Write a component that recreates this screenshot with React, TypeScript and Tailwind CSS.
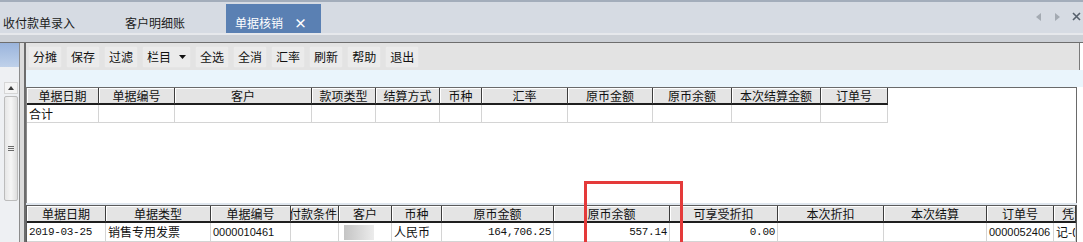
import React from "react";

type Col = { label: string; w: string; value?: string; align?: string; mono?: boolean; head?: string };

const TOP_COLS: Col[] = [
  { label: "单据日期", w: "w-[72px]", value: "合计" },
  { label: "单据编号", w: "w-[76px]" },
  { label: "客户", w: "w-[137px]" },
  { label: "款项类型", w: "w-[64px]" },
  { label: "结算方式", w: "w-[64px]" },
  { label: "币种", w: "w-[42px]" },
  { label: "汇率", w: "w-[86px]" },
  { label: "原币金额", w: "w-[85px]" },
  { label: "原币余额", w: "w-[79px]" },
  { label: "本次结算金额", w: "w-[89px]" },
  { label: "订单号", w: "w-[67px]" },
];

const BOTTOM_COLS: Col[] = [
  { label: "单据日期", w: "w-[79px]", value: "2019-03-25", mono: true },
  { label: "单据类型", w: "w-[105px]", value: "销售专用发票" },
  { label: "单据编号", w: "w-[80px]", value: "0000010461", align: "num" },
  { label: "付款条件", w: "w-[48px]", head: "justify-end pr-[1px]" },
  { label: "客户", w: "w-[53px]", value: "__blur" },
  { label: "币种", w: "w-[50px]", value: "人民币" },
  { label: "原币金额", w: "w-[112px]", value: "164,706.25", align: "right", mono: true },
  { label: "原币余额", w: "w-[116px]", value: "557.14", align: "right", mono: true },
  { label: "可享受折扣", w: "w-[108px]", value: "0.00", align: "right", mono: true },
  { label: "本次折扣", w: "w-[106px]" },
  { label: "本次结算", w: "w-[103px]" },
  { label: "订单号", w: "w-[67px]", value: "0000052406", align: "num" },
  { label: "凭证号", w: "w-[22px]", value: "记-0", head: "justify-start pl-[8px]" },
];

const TOOLS = ["分摊", "保存", "过滤", "栏目", "全选", "全消", "汇率", "刷新", "帮助", "退出"];

function HeaderRow({ cols, h }: { cols: Col[]; h: string }) {
  return (
    <div className={`flex ${h}`}>
      {cols.map((c, i) => (
        <div
          key={i}
          className={`${c.w} shrink-0 flex items-center overflow-hidden whitespace-nowrap bg-[#e4e4e4] border-r border-r-[#3c3c3c] border-b-2 border-b-[#1e1e1e] shadow-[inset_1px_1px_0_#ffffff] ${c.head ?? "justify-center"}`}
        >
          <span className="shrink-0">{c.label}</span>
        </div>
      ))}
    </div>
  );
}

function DataRow({ cols, h }: { cols: Col[]; h: string }) {
  return (
    <div className={`flex ${h} bg-white`}>
      {cols.map((c, i) => (
        <div
          key={i}
          className={`${c.w} shrink-0 flex items-center overflow-hidden whitespace-nowrap border-r border-b border-[#d4d4d4] px-[2px] ${
            c.align === "right" ? "justify-end" : "justify-start"
          }`}
        >
          {c.value === "__blur" ? (
            <div className="ml-[3px] w-[30px] h-[15px] bg-gradient-to-r from-[#c4c4c4] to-[#ececec] blur-[0.5px]" />
          ) : c.mono ? (
            <span className="font-['Liberation_Mono',monospace] text-[11px] tracking-[-0.3px]">{c.value}</span>
          ) : c.align === "num" ? (
            <span className="font-['Liberation_Sans',sans-serif] text-[11px]">{c.value}</span>
          ) : (
            <span>{c.value}</span>
          )}
        </div>
      ))}
    </div>
  );
}

export default function App() {
  return (
    <div className="relative w-[1083px] h-[242px] overflow-hidden bg-white text-[12px] leading-[14px] text-[#111] font-['Noto_Sans_CJK_SC','Noto_Sans',sans-serif]">
      {/* tab bar */}
      <div className="h-[33px] flex items-end bg-[#d6dbe3] border-t-2 border-[#a3adbb]">
        <div className="w-[110px] h-[29px] pl-[3px] pt-[12px] text-[#1b1b1b]">收付款单录入</div>
        <div className="w-[116px] h-[29px] pl-[15px] pt-[12px] text-[#1b1b1b]">客户明细账</div>
        <div className="w-[95px] h-[29px] pl-[9px] pt-[12px] bg-[#5a80b3] text-white flex items-start gap-[11px]">
          <span>单据核销</span>
          <span className="font-bold text-[13px] leading-[14px]">×</span>
        </div>
        <div className="flex-1" />
        <div className="h-full flex items-center gap-[12px] pr-[2px] pb-[2px]">
          <svg width="6" height="8" viewBox="0 0 6 8"><path d="M5 0 L0 4 L5 8 Z" fill="#a4aab2" /></svg>
          <svg width="6" height="8" viewBox="0 0 6 8"><path d="M1 0 L6 4 L1 8 Z" fill="#a4aab2" /></svg>
          <svg width="9" height="9" viewBox="0 0 9 9"><path d="M1 1 L8 8 M8 1 L1 8" stroke="#56606c" strokeWidth="1.6" /></svg>
        </div>
      </div>
      {/* separator */}
      <div className="h-[10px] bg-[#ccd0d6] border-t-2 border-t-[#e6e8ec] border-b border-b-[#6e6e6e]" />
      {/* body */}
      <div className="flex h-[199px]">
        {/* left panel */}
        <div className="w-[20px] flex flex-col bg-[#eef0f3]">
          <div className="h-[24px] bg-gradient-to-b from-[#9ab4dc] to-[#bfd1ea]" />
          <div className="flex-1 pt-[15px] pl-[4px]">
            <div className="w-[14px] h-[12px] flex items-center justify-center bg-[#f4f4f4] border border-[#d6d6d6]">
              <svg width="6" height="4" viewBox="0 0 6 4"><path d="M0 4 L3 0 L6 4 Z" fill="#3c3c3c" /></svg>
            </div>
            <div className="w-[14px] h-[105px] mt-[2px] flex items-center justify-center bg-gradient-to-r from-[#e6e6e6] via-[#f6f6f6] to-[#dedede] border border-[#bcbcbc] rounded-[2px]">
              <div className="flex flex-col gap-[1px]">
                <div className="w-[6px] h-px bg-[#6a6a6a]" />
                <div className="w-[6px] h-px bg-[#6a6a6a]" />
                <div className="w-[6px] h-px bg-[#6a6a6a]" />
              </div>
            </div>
          </div>
        </div>
        {/* divider */}
        <div className="w-[7px] bg-[#dcdcdc] border-l border-l-[#8c8c8c] border-r-2 border-r-[#6c6c6c]" />
        {/* main */}
        <div className="flex-1 flex flex-col">
          <div className="h-[27px] bg-[#e3e3e3] flex items-center gap-[6px] pl-[3px] border-r border-r-[#7a7a7a] mr-[3px]">
            {TOOLS.map((t) => (
              <div key={t} className="h-[20px] px-[4px] flex items-center gap-[8px] bg-[#ebebeb] rounded-[2px] shadow-[0_0_1px_#f8f8f8]">
                <span>{t}</span>
                {t === "栏目" && (
                  <svg width="7" height="4" viewBox="0 0 7 4"><path d="M0 0 L7 0 L3.5 4 Z" fill="#111" /></svg>
                )}
              </div>
            ))}
          </div>
          <div className="h-[17px] bg-[#eaf5fc]" />
          <div className="flex flex-col mr-[6px]">
            <div className="h-[116px] flex flex-col bg-white border border-b-0 border-[#6a6a6a] border-l-[#8a8a8a]">
              <HeaderRow cols={TOP_COLS} h="h-[17px]" />
              <DataRow cols={TOP_COLS} h="h-[18px]" />
            </div>
            <div className="h-[2px] bg-[#dfe6ee]" />
            <div className="flex flex-col border-t border-l border-r border-[#5a5a5a]">
              <HeaderRow cols={BOTTOM_COLS} h="h-[17px]" />
              <DataRow cols={BOTTOM_COLS} h="h-[19px]" />
            </div>
          </div>
        </div>
      </div>
      {/* annotation box */}
      <div className="absolute left-[584px] top-[181px] w-[99px] h-[70px] border-[3px] border-[#e43a3a]" />
    </div>
  );
}
